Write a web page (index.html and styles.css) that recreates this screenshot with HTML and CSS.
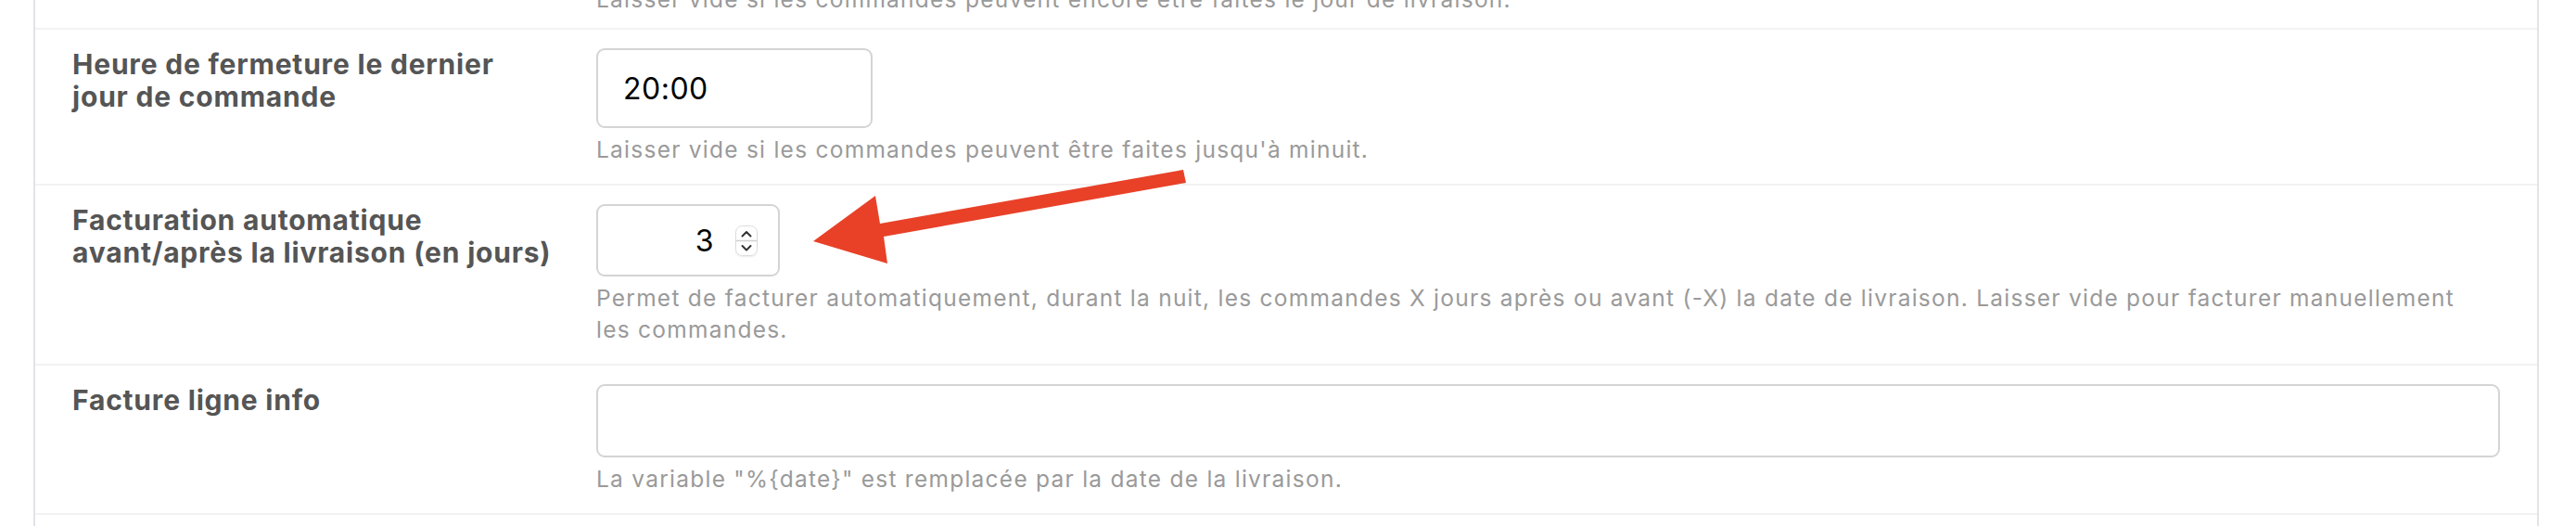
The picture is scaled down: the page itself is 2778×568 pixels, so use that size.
FILE: index.html
```html
<!DOCTYPE html>
<html lang="fr">
<head>
<meta charset="utf-8">
<title>Paramètres de facturation</title>
<link rel="stylesheet" href="styles.css">
</head>
<body>
<div class="card">
  <div class="row row-partial">
    <div class="label-col"></div>
    <div class="field">
      <p class="help">Laisser vide si les commandes peuvent encore être faites le jour de livraison.</p>
    </div>
  </div>
  <div class="row">
    <div class="label">Heure de fermeture le dernier<br>jour de commande</div>
    <div class="field">
      <div class="input input-time"><span class="value">20:00</span></div>
      <p class="help">Laisser vide si les commandes peuvent être faites jusqu'à minuit.</p>
    </div>
  </div>
  <div class="row">
    <div class="label">Facturation automatique<br>avant/après la livraison (en jours)</div>
    <div class="field">
      <div class="input input-number">
        <span class="value">3</span>
        <span class="spinner">
          <svg width="24" height="33" viewBox="0 0 24 33">
            <rect x="0.5" y="0.5" width="23" height="32" rx="7" fill="#fff" stroke="#dcdcdc"/>
            <line x1="1" y1="16.5" x2="23" y2="16.5" stroke="#d0d0d0" stroke-width="1.5"/>
            <polyline points="7.5,11.5 12,7 16.5,11.5" fill="none" stroke="#333" stroke-width="2" stroke-linecap="round" stroke-linejoin="round"/>
            <polyline points="7.5,22 12,26.5 16.5,22" fill="none" stroke="#333" stroke-width="2" stroke-linecap="round" stroke-linejoin="round"/>
          </svg>
        </span>
      </div>
      <p class="help">Permet de facturer automatiquement, durant la nuit, les commandes X jours après ou avant (-X) la date de livraison. Laisser vide pour facturer manuellement<br>les commandes.</p>
    </div>
  </div>
  <div class="row">
    <div class="label">Facture ligne info</div>
    <div class="field">
      <div class="input input-text"></div>
      <p class="help">La variable "%{date}" est remplacée par la date de la livraison.</p>
    </div>
  </div>
  <div class="row row-next"></div>
</div>
<svg class="annotation" width="2778" height="568" viewBox="0 0 2778 568">
  <polygon points="1276,183 1279,197 953,255 957,284 877,260 944,211 949,241" fill="#e84128"/>
</svg>
</body>
</html>
```
FILE: styles.css
```css
* {
  box-sizing: border-box;
}

html,
body {
  margin: 0;
  padding: 0;
  background: #ffffff;
}

body {
  position: relative;
  height: 568px;
  overflow: hidden;
  font-family: "Inter", "Liberation Sans", sans-serif;
}

.card {
  margin: -24px 0 0 36px;
  width: 2702px;
  border-left: 2px solid #e3e3e8;
  border-right: 2px solid #e3e3e8;
  background: #ffffff;
}

.row {
  display: grid;
  grid-template-columns: 565px 1fr;
  padding: 20px 40px;
  border-top: 2px solid #f2f2f2;
}

.row-partial {
  border-top: none;
  padding-top: 0;
  padding-bottom: 14px;
}

.row-next {
  height: 14px;
  padding: 0;
}

.label {
  font-weight: 700;
  font-size: 30px;
  line-height: 35px;
  letter-spacing: 0.8px;
  color: #555555;
}

.field {
  min-width: 0;
}

.input {
  display: flex;
  align-items: center;
  border: 2px solid #d4d4d4;
  border-radius: 9px;
  background: #ffffff;
  font-size: 32px;
  letter-spacing: 0.5px;
  color: #000000;
}

.input-time {
  width: 298px;
  height: 86px;
  padding-left: 27px;
}

.input-number {
  width: 198px;
  height: 78px;
  justify-content: flex-end;
  gap: 23px;
  padding-right: 22px;
}

.spinner {
  display: flex;
  width: 24px;
  height: 33px;
  border-radius: 7px;
  box-shadow: 0 1px 2px rgba(0, 0, 0, 0.08);
}

.input-text {
  width: 100%;
  height: 79px;
}

.help {
  margin: 6px 0 0;
  font-size: 24.5px;
  line-height: 34px;
  letter-spacing: 1.25px;
  color: #9a9a9a;
}

.annotation {
  position: absolute;
  top: 0;
  left: 0;
  pointer-events: none;
}
```
